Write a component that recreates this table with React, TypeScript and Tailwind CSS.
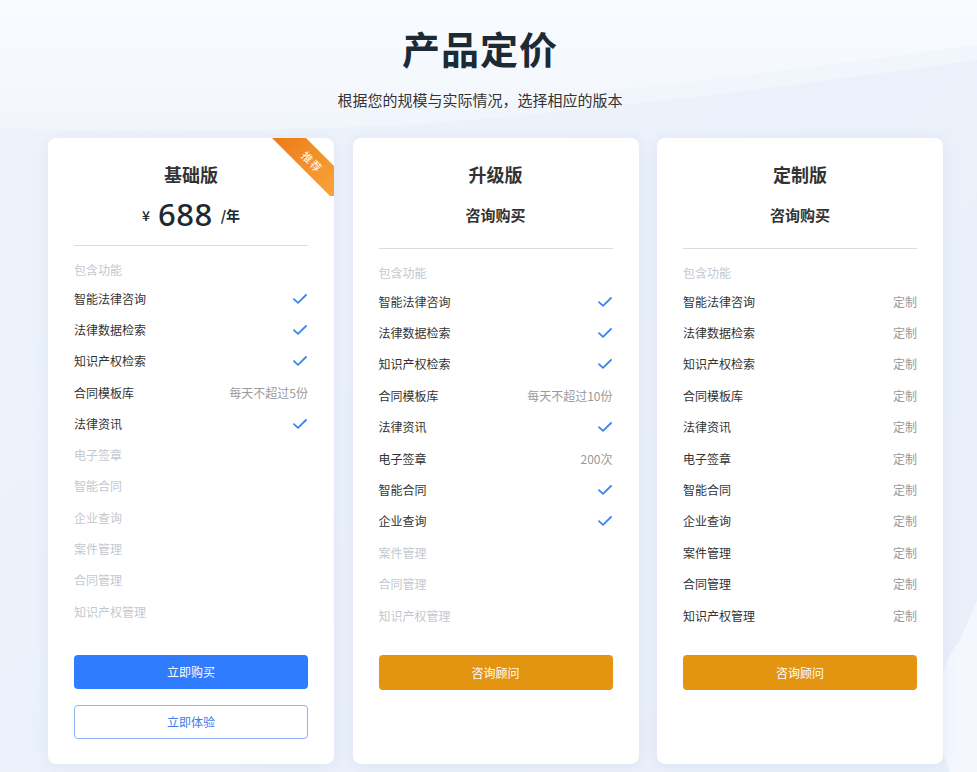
import React from "react";

type Feat = { name: string; v: "check" | "off" | string };

const names = [
  "智能法律咨询",
  "法律数据检索",
  "知识产权检索",
  "合同模板库",
  "法律资讯",
  "电子签章",
  "智能合同",
  "企业查询",
  "案件管理",
  "合同管理",
  "知识产权管理",
];

const basic: Feat[] = names.map((n, i) => ({
  name: n,
  v: i === 3 ? "每天不超过5份" : i < 5 ? "check" : "off",
}));
const upgrade: Feat[] = names.map((n, i) => ({
  name: n,
  v: i === 3 ? "每天不超过10份" : i === 5 ? "200次" : i < 8 ? "check" : "off",
}));
const custom: Feat[] = names.map((n) => ({ name: n, v: "定制" }));

function Check() {
  return (
    <svg width="14" height="10" viewBox="0 0 14 10" fill="none">
      <path d="M1 5.2 L5 8.8 L13 1" stroke="#3b84f4" strokeWidth="1.8" strokeLinecap="round" strokeLinejoin="round" />
    </svg>
  );
}

function Features({ items, top, row }: { items: Feat[]; top: string; row: string }) {
  return (
    <div>
      <div className={`${top} h-[20px] leading-[20px] text-[12px] text-[#c4c8cf]`}>包含功能</div>
      <div className="mt-[3px] flex flex-col">
        {items.map((f) => (
          <div key={f.name} className={`${row} flex items-center justify-between text-[12px]`}>
            <span className={f.v === "off" ? "text-[#c4c8cf]" : "text-[#333]"}>{f.name}</span>
            {f.v === "check" ? (
              <span className="pr-[1px]">
                <Check />
              </span>
            ) : f.v === "off" ? null : (
              <span className="text-[#9a9a9a]">{f.v}</span>
            )}
          </div>
        ))}
      </div>
    </div>
  );
}

function Card({ children }: { children: React.ReactNode }) {
  return (
    <div className="relative bg-white rounded-[8px] shadow-[0_2px_14px_rgba(170,190,225,0.22)] px-[26px] flex flex-col">
      {children}
    </div>
  );
}

export default function App() {
  return (
    <div
      className="relative w-full min-h-[772px] overflow-hidden bg-[#eef3fa]"
      style={{ fontFamily: '"Noto Sans CJK SC", "Noto Sans", sans-serif' }}
    >
      <svg className="absolute inset-0 w-full h-full" viewBox="0 0 977 772" preserveAspectRatio="none">
        <defs>
          <linearGradient id="bgTop" x1="0" y1="0" x2="0" y2="1">
            <stop offset="0" stopColor="#f8fbff" />
            <stop offset="1" stopColor="#f3f7fd" />
          </linearGradient>
          <linearGradient id="bgBot" x1="0" y1="0" x2="1" y2="1">
            <stop offset="0" stopColor="#eef3fb" />
            <stop offset="1" stopColor="#e9eff9" />
          </linearGradient>
        </defs>
        <rect x="0" y="0" width="977" height="772" fill="url(#bgBot)" />
        <path d="M0 0 H977 V45 C800 70 600 95 420 108 C260 118 120 118 0 112 Z" fill="url(#bgTop)" />
        <path d="M0 112 C120 118 260 118 420 108 C600 95 800 70 977 45 V60 C800 85 600 110 420 124 C260 132 120 132 0 128 Z" fill="#f2f6fc" opacity="0.8" />
        <path d="M960 640 C935 670 930 720 950 772 L977 772 L977 600 Z" fill="#f5f7fd" opacity="0.9" />
      </svg>

      <div className="relative">
        <div className="pt-[24px] pr-[17px] flex flex-col items-center">
          <h1 className="text-[38px] leading-[48px] font-bold text-[#1c2a35] tracking-[1px]">产品定价</h1>
          <p className="mt-[17px] text-[15px] leading-[22px] text-[#333]">根据您的规模与实际情况，选择相应的版本</p>
        </div>

        <div className="mt-[27px] pl-[48px] pr-[34px] grid grid-cols-3 gap-[18.5px] pb-[8px]">
          {/* Basic */}
          <Card>
            <div className="absolute right-0 top-0 w-[62px] h-[58px] overflow-hidden rounded-tr-[8px]">
              <div className="absolute left-[-16px] top-[10px] w-[110px] h-[24px] rotate-45 bg-gradient-to-r from-[#e97510] to-[#fbab3c] flex items-center justify-center">
                <span className="text-white text-[11px] leading-none tracking-[1px] pl-[4px]">推荐</span>
              </div>
            </div>
            <div className="pt-[23px] h-[49px] text-center text-[18px] leading-[26px] font-bold text-[#333]">基础版</div>
            <div className="mt-[7px] h-[40px] flex items-center justify-center gap-[8px] text-[#1c2a35]">
              <span className="text-[14px] font-medium mt-[2px]">¥</span>
              <span className="text-[31px] font-medium leading-none tracking-[0.5px]" style={{ fontFamily: '"Noto Sans", "Open Sans", sans-serif' }}>688</span>
              <span className="text-[14px] font-bold mt-[2px]">/年</span>
            </div>
            <div className="mt-[11px] h-px bg-[#d9dde3]" />
            <Features items={basic} top="mt-[14px]" row="h-[31.3px]" />
            <button className="mt-[28px] h-[34px] rounded-[4px] bg-[#2f7cff] text-white text-[12px]">立即购买</button>
            <button className="mt-[16px] h-[34px] rounded-[4px] border border-[#8db3f6] bg-white text-[#3c7ef0] text-[12px]">立即体验</button>
            <div className="h-[25px]" />
          </Card>

          {/* Upgrade */}
          <Card>
            <div className="pt-[23px] h-[49px] text-center text-[18px] leading-[26px] font-bold text-[#333]">升级版</div>
            <div className="mt-[16px] h-[24px] leading-[24px] text-center text-[15px] font-bold text-[#333]">咨询购买</div>
            <div className="mt-[21px] h-px bg-[#d9dde3]" />
            <Features items={upgrade} top="mt-[14px]" row="h-[31.4px]" />
            <button className="mt-[24px] h-[35px] rounded-[4px] bg-[#e39512] text-white text-[12px]">咨询顾问</button>
          </Card>

          {/* Custom */}
          <Card>
            <div className="pt-[23px] h-[49px] text-center text-[18px] leading-[26px] font-bold text-[#333]">定制版</div>
            <div className="mt-[16px] h-[24px] leading-[24px] text-center text-[15px] font-bold text-[#333]">咨询购买</div>
            <div className="mt-[21px] h-px bg-[#d9dde3]" />
            <Features items={custom} top="mt-[14px]" row="h-[31.4px]" />
            <button className="mt-[24px] h-[35px] rounded-[4px] bg-[#e39512] text-white text-[12px]">咨询顾问</button>
          </Card>
        </div>
      </div>
    </div>
  );
}
